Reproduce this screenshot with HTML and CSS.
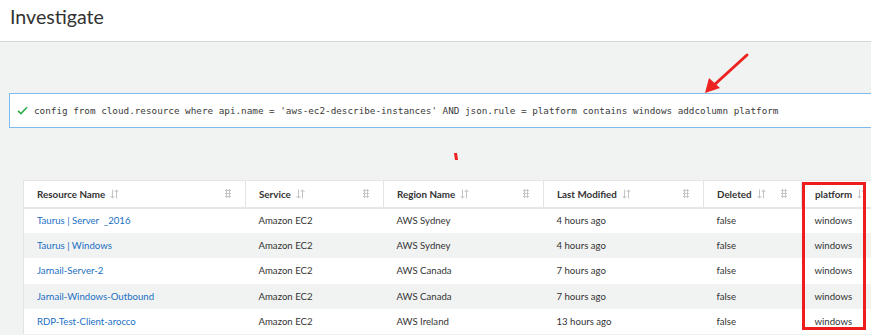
FILE: index.html
```html
<!DOCTYPE html>
<html>
<head>
<meta charset="utf-8">
<link rel="stylesheet" href="styles.css">
</head>
<body>
<header class="topbar"><h1 class="title">Investigate</h1></header>
<main class="content">
  <div class="query">
    <svg class="check" width="11" height="9" viewBox="0 0 11 9"><path d="M1 4.8 L4 7.6 L10 1.2" fill="none" stroke="#2fae4b" stroke-width="1.6"/></svg>
    <span class="qtext">config from cloud.resource where api.name = 'aws-ec2-describe-instances' AND json.rule = platform contains windows addcolumn platform</span>
  </div>
  <div class="table-wrap">
    <table class="grid">
      <colgroup>
        <col class="c1"><col class="c2"><col class="c3"><col class="c4"><col class="c5"><col class="c6">
      </colgroup>
      <thead>
        <tr>
          <th><div class="th-in"><span class="lbl">Resource Name</span><svg class="sort" width="9" height="10" viewBox="0 0 9 10"><path d="M2.5 0.5 V9 M0.5 7 L2.5 9.2 L4.5 7 M6.5 9.5 V1 M4.5 3 L6.5 0.8 L8.5 3" fill="none" stroke="#c4c4c4" stroke-width="1"/></svg><span class="grip"></span></div></th>
          <th><div class="th-in"><span class="lbl">Service</span><svg class="sort" width="9" height="10" viewBox="0 0 9 10"><path d="M2.5 0.5 V9 M0.5 7 L2.5 9.2 L4.5 7 M6.5 9.5 V1 M4.5 3 L6.5 0.8 L8.5 3" fill="none" stroke="#c4c4c4" stroke-width="1"/></svg><span class="grip"></span></div></th>
          <th><div class="th-in"><span class="lbl">Region Name</span><svg class="sort" width="9" height="10" viewBox="0 0 9 10"><path d="M2.5 0.5 V9 M0.5 7 L2.5 9.2 L4.5 7 M6.5 9.5 V1 M4.5 3 L6.5 0.8 L8.5 3" fill="none" stroke="#c4c4c4" stroke-width="1"/></svg><span class="grip"></span></div></th>
          <th><div class="th-in"><span class="lbl">Last Modified</span><svg class="sort" width="9" height="10" viewBox="0 0 9 10"><path d="M2.5 0.5 V9 M0.5 7 L2.5 9.2 L4.5 7 M6.5 9.5 V1 M4.5 3 L6.5 0.8 L8.5 3" fill="none" stroke="#c4c4c4" stroke-width="1"/></svg><span class="grip"></span></div></th>
          <th><div class="th-in"><span class="lbl">Deleted</span><svg class="sort" width="9" height="10" viewBox="0 0 9 10"><path d="M2.5 0.5 V9 M0.5 7 L2.5 9.2 L4.5 7 M6.5 9.5 V1 M4.5 3 L6.5 0.8 L8.5 3" fill="none" stroke="#c4c4c4" stroke-width="1"/></svg><span class="grip"></span></div></th>
          <th><div class="th-in"><span class="lbl">platform</span><svg class="sort" width="9" height="10" viewBox="0 0 9 10"><path d="M2.5 0.5 V9 M0.5 7 L2.5 9.2 L4.5 7 M6.5 9.5 V1 M4.5 3 L6.5 0.8 L8.5 3" fill="none" stroke="#c4c4c4" stroke-width="1"/></svg></div></th>
        </tr>
      </thead>
      <tbody>
        <tr><td><a class="link">Taurus | Server&nbsp; _2016</a></td><td>Amazon EC2</td><td>AWS Sydney</td><td>4 hours ago</td><td>false</td><td>windows</td></tr>
        <tr><td><a class="link">Taurus | Windows</a></td><td>Amazon EC2</td><td>AWS Sydney</td><td>4 hours ago</td><td>false</td><td>windows</td></tr>
        <tr><td><a class="link">Jarnail-Server-2</a></td><td>Amazon EC2</td><td>AWS Canada</td><td>7 hours ago</td><td>false</td><td>windows</td></tr>
        <tr><td><a class="link">Jarnail-Windows-Outbound</a></td><td>Amazon EC2</td><td>AWS Canada</td><td>7 hours ago</td><td>false</td><td>windows</td></tr>
        <tr><td><a class="link">RDP-Test-Client-arocco</a></td><td>Amazon EC2</td><td>AWS Ireland</td><td>13 hours ago</td><td>false</td><td>windows</td></tr>
      </tbody>
    </table>
    <div class="highlight"></div>
  </div>
</main>
<svg class="annot" width="871" height="335" viewBox="0 0 871 335">
  <line x1="747" y1="55" x2="713" y2="86" stroke="#ec2320" stroke-width="3" stroke-linecap="round"/>
  <polygon points="705,93 709,78 720,88" fill="#ec2320"/>
  <polygon points="454,153 457,153 458,160 455,160" fill="#ec2320"/>
</svg>
</body>
</html>
```
FILE: styles.css
```css
* { box-sizing: border-box; }
html, body { margin: 0; padding: 0; }
body {
  width: 871px;
  height: 335px;
  overflow: hidden;
  background: #f1f2f2;
  font-family: Lato, "Open Sans", sans-serif;
  color: #333;
  position: relative;
}
.topbar {
  height: 42px;
  background: #fff;
  border-bottom: 1px solid #d6d6d6;
  padding-left: 10px;
  display: flex;
  align-items: center;
}
.title {
  margin: 0;
  font-size: 19.6px;
  font-weight: 400;
  color: #333;
  position: relative;
  top: -4px;
}
.content {
  padding: 51px 0 0 9px;
}
.query {
  height: 35px;
  background: #fff;
  border: 1px solid #7fbbed;
  border-right: none;
  display: flex;
  align-items: center;
  padding-left: 7px;
  gap: 6px;
}
.check { flex: none; }
.qtext {
  font-family: "DejaVu Sans Mono", "Liberation Mono", monospace;
  font-size: 9.3px;
  color: #3a3a3a;
  white-space: nowrap;
}
.table-wrap {
  margin-top: 52px;
  margin-left: 14px;
  position: relative;
  width: 848px;
}
.grid {
  border-collapse: collapse;
  table-layout: fixed;
  width: 870px;
  background: #fff;
  border-left: 1px solid #e3e3e3;
}
.c1 { width: 222px; }
.c2 { width: 138px; }
.c3 { width: 160px; }
.c4 { width: 160px; }
.c5 { width: 98px; }
.c6 { width: 92px; }
.grid th {
  height: 27px;
  padding: 0 0 0 13px;
  text-align: left;
  font-size: 9.8px;
  font-weight: 700;
  color: #333;
  border-top: 1px solid #e6e6e6;
  border-bottom: 2px solid #e6e6e6;
  border-left: 1px solid #e3e3e3;
}
.grid th:first-child { border-left: none; }
.th-in {
  display: flex;
  align-items: center;
  padding-right: 14px;
}
.sort { margin-left: 5px; flex: none; }
.grip {
  margin-left: auto;
  width: 6px;
  height: 9px;
  background-image: radial-gradient(circle, #c6c6c6 1px, transparent 1.1px);
  background-size: 3px 3px;
  flex: none;
}
.grid td {
  height: 25.4px;
  padding: 0 0 0 13px;
  font-size: 9.6px;
  color: #333;
  white-space: nowrap;
}
.grid tbody tr:nth-child(even) td { background: #f1f2f2; }
.link { color: #1a6fc4; text-decoration: none; }
.highlight {
  position: absolute;
  left: 779px;
  top: 2px;
  width: 64px;
  height: 148px;
  border: 3px solid #ee1c1c;
}
.annot {
  position: absolute;
  left: 0;
  top: 0;
  pointer-events: none;
}
```
